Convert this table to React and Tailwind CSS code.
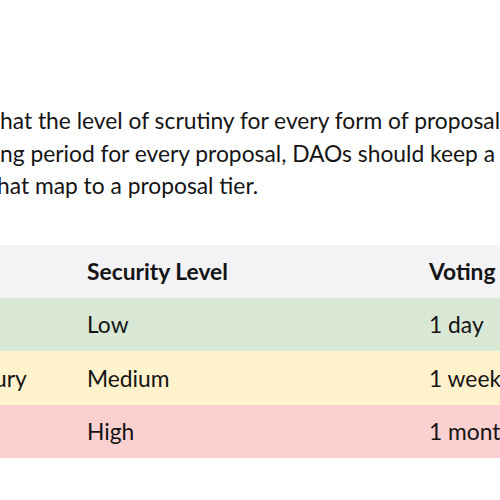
import React from "react";

const TIERS = [
  { name: "Text", level: "Low", period: "1 day", bg: "bg-[#d9e7d5]" },
  { name: "Treasury", level: "Medium", period: "1 week", bg: "bg-[#fff2cc]" },
  { name: "Ops", level: "High", period: "1 month", bg: "bg-[#fbd0d0]" },
];

const App = () => {
  return (
    <div className="w-[500px] h-[500px] overflow-hidden bg-white text-[#141414] font-['Lato','Liberation_Sans',sans-serif] text-[22.8px]">
      <div className="pt-[104px] leading-[32.5px] whitespace-nowrap">
        <p>hat the level of scrutiny for every form of proposal is</p>
        <p>ng period for every proposal, DAOs should keep a record of</p>
        <p className="ml-[-3px]">hat map to a proposal tier.</p>
      </div>

      <div className="mt-[43px] ml-[-83px] w-[700px]">
        <div className="flex h-[53px] items-center bg-[#f3f2f5] font-bold">
          <div className="w-[145px] pl-[25px]">Type</div>
          <div className="w-[342px] pl-[25px]">Security Level</div>
          <div className="pl-[25px]">Voting Period</div>
        </div>
        {TIERS.map((tier) => (
          <div key={tier.level} className={`flex h-[53.5px] items-center ${tier.bg}`}>
            <div className="w-[145px] pl-[25px]">{tier.name}</div>
            <div className="w-[342px] pl-[25px]">{tier.level}</div>
            <div className="pl-[25px]">{tier.period}</div>
          </div>
        ))}
      </div>
    </div>
  );
};

export default App;
